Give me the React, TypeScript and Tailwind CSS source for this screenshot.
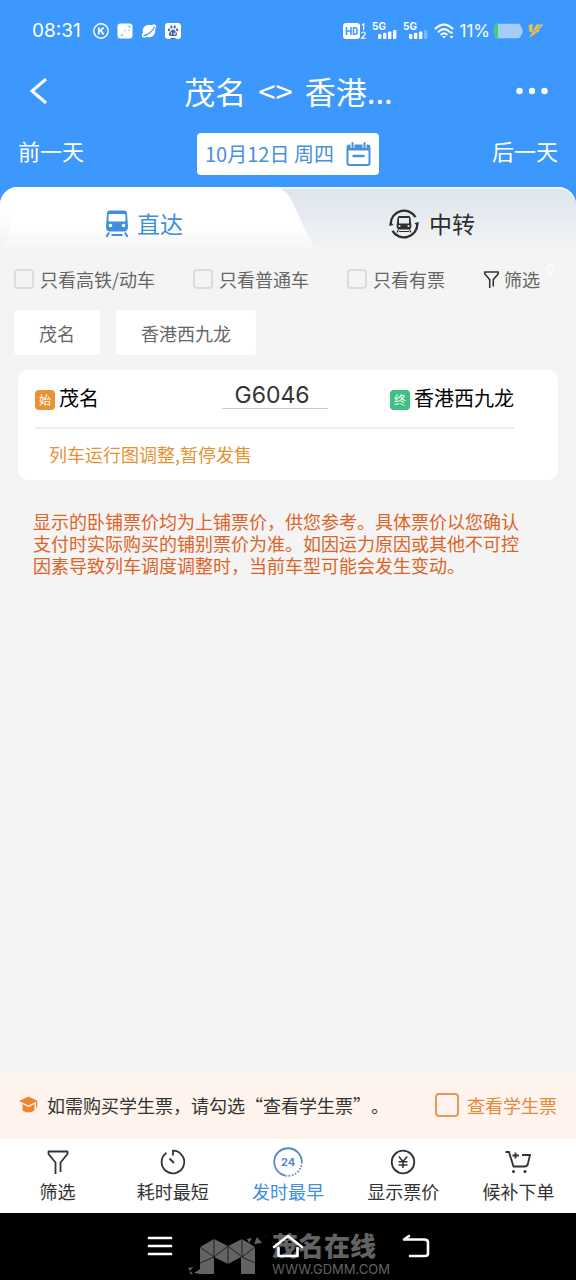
import React, { useState } from 'react';

function StatusBar() {
  return (
    <div className="flex h-[62px] items-center justify-between pl-8 pr-8 font-['Inter',sans-serif] text-white">
      <div className="flex items-center gap-2">
        <span className="mr-1 text-[19px] leading-6">08:31</span>
        <svg width="16" height="16" viewBox="0 0 16 16">
          <circle cx="8" cy="8" r="7.2" fill="none" stroke="#fff" strokeWidth="1.4" />
          <path d="M5.8 4.6v6.8M10.6 4.6L6.2 8.3M7.6 7.3l3 4.1" stroke="#fff" strokeWidth="1.7" fill="none" />
        </svg>
        <svg width="16" height="16" viewBox="0 0 16 16">
          <rect x="0.5" y="0.5" width="15" height="15" rx="3" fill="#fff" />
          <path d="M10.5 3h2.5v2.5M3.5 12.5h2v-2M7 7.5h1.5M11 7.5h1.5" stroke="#7fb6f5" fill="none" />
        </svg>
        <svg width="16" height="16" viewBox="0 0 16 16">
          <circle cx="8" cy="8" r="6.3" fill="#fff" />
          <ellipse cx="8" cy="8" rx="9" ry="3.6" transform="rotate(-42 8 8)" fill="#fff" />
          <path d="M2.5 12.6C6 12.4 11.6 8.6 13.6 3.6" stroke="#3c98fc" strokeWidth="1.2" fill="none" />
        </svg>
        <svg width="16" height="16" viewBox="0 0 16 16">
          <rect width="16" height="16" rx="3" fill="#fff" />
          <g fill="#4468b8">
            <ellipse cx="4" cy="6.8" rx="1.1" ry="1.5" />
            <ellipse cx="6.4" cy="3.9" rx="1.1" ry="1.6" />
            <ellipse cx="9.7" cy="3.9" rx="1.1" ry="1.6" />
            <ellipse cx="12.1" cy="6.8" rx="1.1" ry="1.5" />
            <path d="M8 6.6c1.6 0 2 1.5 3.2 2.6 1.7 1.6 .8 3.9-1.2 3.8-1.4-.1-2.6-.1-4 0-2 .1-2.9-2.2-1.2-3.8C6 8.1 6.4 6.6 8 6.6z" />
          </g>
          <path d="M6.5 9.3v2.2M9 9.6v1.6h1.6V9.6" stroke="#fff" strokeWidth=".8" fill="none" />
          <path d="M5.5 15.5h5" stroke="#4468b8" />
        </svg>
      </div>
      <div className="flex items-center">
        <svg width="25" height="18" viewBox="0 0 25 18">
          <rect x="0" y="1" width="17" height="16" rx="3" fill="#fff" />
          <path d="M3.5 5v8M8 5v8M3.5 9H8M10.5 5.8v6.4H12q2 0 2-2V7.8q0-2-2-2z" stroke="#3c98fc" strokeWidth="1.5" fill="none" />
          <path d="M19 3l1.7-1.2V8M18.7 11.7q.3-1.7 1.9-1.7 1.7 0 1.7 1.5 0 1-1.4 2.2l-2.2 2.5h4" stroke="#fff" strokeWidth="1.2" fill="none" />
        </svg>
        {[4, 3].map((bars) => (
          <svg key={bars} className="ml-1 mr-[2px]" width="25" height="26" viewBox="0 0 25 26">
            <text x="0" y="12" fontSize="10" fontWeight="700" fill="#fff">5G</text>
            {[0, 1, 2, 3].map((i) => (
              <rect
                key={i}
                x={6 + i * 5}
                y={16 - i * 1.3}
                width="3.4"
                height={5 + i * 1.3}
                rx="1"
                fill="#fff"
                opacity={i < bars ? 1 : 0.3}
              />
            ))}
          </svg>
        ))}
        <svg className="ml-1" width="21" height="18" viewBox="0 0 21 18">
          <path d="M1.5 6.5Q10-1.5 18.5 6.5M4.5 9.7Q10 4.5 15.5 9.7M7.3 12.5Q10 10 12.7 12.5" stroke="#fff" strokeWidth="2" fill="none" strokeLinecap="round" />
          <path d="M8 14h4l-2 2.5z" fill="#fff" />
          <path d="M17.5 9l2 2.5h-4zM17.5 16.5l2-2.5h-4z" fill="#fff" />
        </svg>
        <span className="ml-1 text-[17px] leading-6">11%</span>
        <svg className="ml-1" width="30" height="16" viewBox="0 0 30 16">
          <path d="M4 .8h20q2.5 0 3 3L28.6 6v4L27 12.2q-.5 3-3 3H4q-3.5 0-3.5-3.5V4.3Q.5.8 4 .8z" fill="#a5cdfa" />
          <path d="M4 .8v14.4q-3.5 0-3.5-3.5V4.3Q.5.8 4 .8z" fill="#41cf68" />
        </svg>
        <svg className="ml-1" width="16" height="16" viewBox="0 0 16 16">
          <path d="M.5 2L5 1 4 7.5 8.5 1.5H15.5L10.5 7H12.5L1 15l3.500-6H1.5z" fill="#e5c34a" />
          <path d="M7.500 2L4.500 8.500M12.500 2.500L6 9.500" stroke="#3c98fc" strokeWidth=".8" />
        </svg>
      </div>
    </div>
  );
}

function CalendarIcon() {
  return (
    <svg width="25" height="25" viewBox="0 0 25 25" fill="none">
      <rect x="1.5" y="3.5" width="22" height="19.5" rx="2" stroke="#4a90d9" strokeWidth="2" />
      <path d="M1.5 3.5h22v5h-22z" fill="#4a90d9" />
      <path d="M6.5 0v6M18.5 0v6" stroke="#fff" strokeWidth="4" />
      <path d="M6.5 1v5M18.5 1v5" stroke="#4a90d9" strokeWidth="2" strokeLinecap="round" />
      <path d="M7.5 14h10" stroke="#4a90d9" strokeWidth="2.4" strokeLinecap="round" />
    </svg>
  );
}

function Header() {
  return (
    <header className="bg-[#3c98fc] text-white">
      <StatusBar />
      <div className="flex h-[58px] items-center justify-between pl-[29px] pr-7">
        <button aria-label="返回" className="w-8">
          <svg width="19" height="26" viewBox="0 0 19 26" fill="none" stroke="#fff" strokeWidth="3">
            <path d="M17 1L3 13l14 12" />
          </svg>
        </button>
        <h1 className="flex gap-3 text-[31px] leading-10">
          <span>茂名</span>
          <span>&lt;&gt;</span>
          <span>香港...</span>
        </h1>
        <button aria-label="更多" className="w-8">
          <svg width="32" height="8" viewBox="0 0 32 8" fill="#fff">
            <circle cx="3.5" cy="4" r="3.2" />
            <circle cx="16" cy="4" r="3.2" />
            <circle cx="28.5" cy="4" r="3.2" />
          </svg>
        </button>
      </div>
      <div className="flex h-[67px] items-start justify-between px-[18px] pt-[13px]">
        <button className="text-[22px] leading-[34px]">前一天</button>
        <button className="flex h-[42px] w-[182px] items-center justify-between rounded bg-white px-2 text-xl text-[#4a90d9]">
          <span>10月12日 周四</span>
          <CalendarIcon />
        </button>
        <button className="text-[22px] leading-[34px]">后一天</button>
      </div>
    </header>
  );
}

function TrainIcon() {
  return (
    <svg width="24" height="28" viewBox="0 0 24 28">
      <path d="M5 .5h14q3 0 3 3l1 13q0 5-4 5H5q-4 0-4-5l1-13q0-3 3-3z" fill="#418fdc" />
      <rect x="3.5" y="4" width="17" height="7.5" rx="1" fill="#fff" />
      <circle cx="5.5" cy="15.5" r="1.8" fill="#fff" />
      <circle cx="18.5" cy="15.5" r="1.8" fill="#fff" />
      <path d="M4 22.5L1.5 27M20 22.5l2.5 4.5M6.5 25h11" stroke="#418fdc" strokeWidth="2" />
    </svg>
  );
}

function TransferIcon() {
  return (
    <svg width="30" height="30" viewBox="0 0 30 30" fill="none" stroke="#2e2e2e">
      <path d="M1.7 15A13.3 13.3 0 0 1 26.5 8.2M28.3 15A13.3 13.3 0 0 1 3.5 21.8" strokeWidth="2.3" />
      <path d="M0 17l1.500-4.500L4.500 16zM30 13l-1.500 4.500-3-3.500z" fill="#2e2e2e" stroke="none" />
      <path d="M10.500 7h9q2 0 2 2l.9 7.500q0 4-2.700 4h-9.400q-2.700 0-2.700-4L8.500 9q0-2 2-2z" fill="#2e2e2e" stroke="none" />
      <rect x="10" y="9" width="10" height="5.500" fill="#e9edf2" stroke="none" />
      <circle cx="10.500" cy="17" r="1.100" fill="#e9edf2" stroke="none" />
      <circle cx="19.500" cy="17" r="1.100" fill="#e9edf2" stroke="none" />
      <path d="M9.500 20.500L8 23.500M20.500 20.500L22 23.500M10 22.500h10" strokeWidth="1.200" />
    </svg>
  );
}

function Tabs() {
  return (
    <div className="bg-[#3c98fc]">
      <div role="tablist" className="relative flex h-[65px] overflow-hidden rounded-t-[18px] bg-gradient-to-b from-[#dde4ed] to-[#f4f4f4] shadow-[inset_0_2px_0_#f3f8ff]">
        <svg className="absolute inset-y-0 left-0 h-full w-[55%]" viewBox="0 0 317 65" preserveAspectRatio="none">
          <defs>
            <linearGradient id="tab" x1="0" y1="0" x2="0" y2="1">
              <stop offset="0.6" stopColor="#fff" />
              <stop offset="1" stopColor="#f4f4f4" />
            </linearGradient>
            <linearGradient id="edge" x1="0" y1="0" x2="0" y2="1">
              <stop offset="0" stopColor="#f4f4f4" stopOpacity="0" />
              <stop offset="1" stopColor="#f4f4f4" />
            </linearGradient>
          </defs>
          <path d="M0 65V0H270q15 0 21 12L316 65z" fill="url(#tab)" />
          <path d="M0 24h15L4 65H0z" fill="url(#edge)" />
        </svg>
        <button role="tab" aria-selected="true" className="relative flex flex-1 items-center justify-center gap-2 pt-2 text-[23px] text-[#418fdc]">
          <TrainIcon />
          直达
        </button>
        <button role="tab" aria-selected="false" className="relative flex flex-1 items-center justify-center gap-2.5 pt-2 text-[23px] text-[#2e2e2e]">
          <TransferIcon />
          中转
        </button>
      </div>
    </div>
  );
}

function FunnelIcon({ size, width }: { size: number; width: number }) {
  return (
    <svg width={size} height={size} viewBox="0 0 24 24" fill="none" stroke="#333" strokeWidth={width} strokeLinejoin="round">
      <path d="M9.5 24V12.5L2.500 4V1.500h19V4l-7 8.500V22" />
    </svg>
  );
}

function Filters() {
  return (
    <div className="relative flex h-[54px] items-center gap-[38px] px-[14px] text-lg text-[#666]">
      {['只看高铁/动车', '只看普通车', '只看有票'].map((label) => (
        <label key={label} className="flex shrink-0 items-center gap-1.5">
          <input type="checkbox" className="h-5 w-5 appearance-none rounded-sm border-2 border-[#dcdcdc] checked:bg-[#3c98fc]" />
          {label}
        </label>
      ))}
      <button className="flex shrink-0 items-center gap-1">
        <FunnelIcon size={17} width={2.2} />
        筛选
      </button>
      <span className="absolute right-[22px] top-[7px] text-sm text-white">0</span>
    </div>
  );
}

function TrainCard() {
  return (
    <section className="mx-[18px] mt-[15px] h-[110px] rounded-[10px] bg-white pl-[17px] pr-11 pt-3">
      <div className="flex items-start border-b-2 border-[#ededed] pb-[13px]">
        <div className="flex flex-1 items-center gap-1 text-xl leading-8 text-black">
          <span className="mt-1 flex h-5 w-5 items-center justify-center rounded bg-[#ea9236] text-xs text-white">始</span>
          茂名
        </div>
        <div className="mr-[62px] w-[106px] border-b border-[#ccc] pr-1.5 text-center font-['Inter',sans-serif] text-[23px] leading-[26px] text-[#333]">
          G6046
        </div>
        <div className="flex items-center gap-1 text-xl leading-8 text-black">
          <span className="mt-1 flex h-5 w-5 items-center justify-center rounded bg-[#3dc080] text-xs text-white">终</span>
          香港西九龙
        </div>
      </div>
      <p className="pl-[14px] pt-[11px] text-lg leading-7 text-[#e59235]">列车运行图调整,暂停发售</p>
    </section>
  );
}

function TimerIcon() {
  return (
    <svg width="28" height="28" viewBox="0 0 28 28" fill="none" stroke="#333" strokeWidth="1.8">
      <path d="M14 7.5V2.700a11.300 11.300 0 1 1-6.500 2M10.500 10.500l4.500 4.500" />
    </svg>
  );
}

function Clock24Icon() {
  return (
    <svg width="30" height="30" viewBox="0 0 30 30" fill="none" stroke="#5b84cf" strokeWidth="1.8">
      <path d="M12 28.5A13.8 13.8 0 1 1 28.8 15" />
      <path d="M28.8 15A13.8 13.8 0 0 1 12 28.5" strokeDasharray="1.6 1.6" />
      <text x="15" y="19" textAnchor="middle" fontFamily="Inter" fontSize="11" fontWeight="700" fill="#5b84cf" stroke="none">24</text>
    </svg>
  );
}

function YenIcon() {
  return (
    <svg width="26" height="26" viewBox="0 0 26 26" fill="none" stroke="#333" strokeWidth="1.8">
      <circle cx="13" cy="13" r="11.3" />
      <path d="M8.8 7.5l4.2 5 4.2-5M13 12.5V19M8.5 12.8h9M8.5 16h9" strokeWidth="1.6" />
    </svg>
  );
}

function CartIcon() {
  return (
    <svg width="26" height="24" viewBox="0 0 26 24" fill="none" stroke="#333" strokeWidth="1.8">
      <path d="M.5 2H4l4.5 14.5h11q3 0 3.500-3L25 5h-8M10.500 2.500v6M7.500 5.500h6.500" />
      <circle cx="8.5" cy="21.5" r="1.5" fill="#333" stroke="none" />
      <circle cx="20" cy="21.5" r="1.5" fill="#333" stroke="none" />
    </svg>
  );
}

const sorts = [
  { label: '筛选', icon: <FunnelIcon size={24} width={1.8} /> },
  { label: '耗时最短', icon: <TimerIcon /> },
  { label: '发时最早', icon: <Clock24Icon /> },
  { label: '显示票价', icon: <YenIcon /> },
  { label: '候补下单', icon: <CartIcon /> },
];

function BottomBar() {
  const [active, setActive] = useState('发时最早');

  return (
    <nav className="grid h-[74px] grid-cols-5 bg-white">
      {sorts.map(({ label, icon }) => (
        <button
          key={label}
          onClick={() => setActive(label)}
          className={`flex flex-col items-center pt-[7px] text-lg leading-7 ${label === active ? 'text-[#418fdc]' : 'text-[#333]'}`}
        >
          <span className="flex h-[31px] items-center">{icon}</span>
          {label}
        </button>
      ))}
    </nav>
  );
}

function Watermark() {
  return (
    <div className="absolute left-[188px] top-[19px] flex text-[#636363]">
      <svg className="mt-1" width="80" height="40" viewBox="0 0 80 40">
        <path d="M12 38V11l14-8 14 7 14-7 13 8v27H53V21L40 28 26 21v17z" fill="#636363" />
        <path d="M26 3v18M54 3v18M40 10v18M12 11l14 10 14-11 14 11 13-10M12 27l14-6M67 27l-13-6" stroke="#111" strokeWidth=".8" fill="none" />
        <path d="M59 3l5-1-3 5zM69 1l5 6-8 1zM77 0l1 1h-1zM0 32l5-1-3 4zM6 37l6-4v5zM2 35l3 3H2z" fill="#636363" />
      </svg>
      <div className="ml-1 flex flex-col gap-[3px]">
        <div className="text-[26px] font-black leading-[26px]">茂名在线</div>
        <div className="font-['Inter',sans-serif] text-[13px] leading-4">WWW.GDMM.COM</div>
      </div>
    </div>
  );
}

function SystemNav() {
  return (
    <div className="relative flex h-[67px] items-center justify-center gap-[98px] bg-black pb-0.5">
      <Watermark />
      <button aria-label="菜单" className="relative">
        <svg width="28" height="22" viewBox="0 0 28 22" stroke="#fff" strokeWidth="2.6" strokeLinecap="round">
          <path d="M3 3h22M3 11h22M3 19h22" />
        </svg>
      </button>
      <button aria-label="主页" className="relative">
        <svg width="32" height="24" viewBox="0 0 32 24" fill="none" stroke="#fff" strokeWidth="2.6" strokeLinecap="round" strokeLinejoin="round">
          <path d="M2 13L16 2l14 11M6.5 14v8h19v-8" />
        </svg>
      </button>
      <button aria-label="后退" className="relative">
        <svg width="28" height="24" viewBox="0 0 28 24" fill="none" stroke="#fff" strokeWidth="2.6" strokeLinecap="round" strokeLinejoin="round">
          <path d="M7 2L2 5.5h20q4 0 4 3v11q0 2.500-3 2.500H8" />
        </svg>
      </button>
    </div>
  );
}

export default function App() {
  return (
    <div lang="zh-CN" className="flex min-h-screen flex-col bg-[#f4f4f4] font-['Noto_Sans_CJK_SC',sans-serif] [text-spacing-trim:space-all]">
      <Header />
      <Tabs />
      <main className="flex-1">
        <Filters />
        <div className="mt-1 flex gap-4 px-[14px] text-lg text-[#666]">
          <button className="h-[45px] rounded bg-white px-[25px]">茂名</button>
          <button className="h-[45px] rounded bg-white px-[25px]">香港西九龙</button>
        </div>
        <TrainCard />
        <p className="mt-[30px] pl-[33px] pr-[42px] text-lg leading-[22px] text-[#dd6327]">
          显示的卧铺票价均为上铺票价，供您参考。具体票价以您确认支付时实际购买的铺别票价为准。如因运力原因或其他不可控因素导致列车调度调整时，当前车型可能会发生变动。
        </p>
      </main>
      <div className="flex h-[65px] items-center justify-between bg-[#fff3ed] px-[19px] pb-[3px] text-lg">
        <div className="flex items-center gap-[9px] text-[#333]">
          <svg width="19" height="18" viewBox="0 0 19 18" fill="#ee8530">
            <path d="M9.5.5L19 5 9.500 9.500 0 5z" />
            <path d="M3.500 8l6 3 6-3v6.500q-6 4-12 0zM17 6h1.200v5.500H17z" />
          </svg>
          <span>如需购买学生票，请勾选“查看学生票”。</span>
        </div>
        <label className="flex items-center gap-2 text-[#e28a3b]">
          <input type="checkbox" className="h-6 w-6 appearance-none rounded border-2 border-[#e59a5a] checked:bg-[#e59a5a]" />
          查看学生票
        </label>
      </div>
      <BottomBar />
      <SystemNav />
    </div>
  );
}
